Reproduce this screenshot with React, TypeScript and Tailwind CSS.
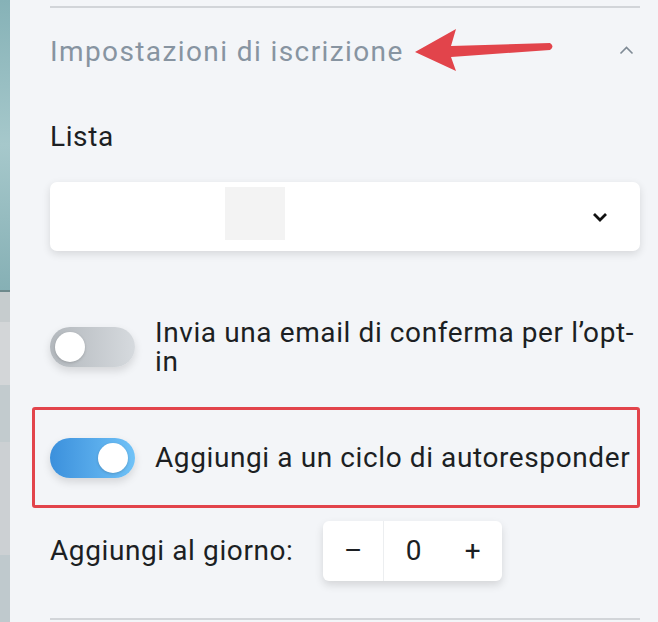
import { useState } from 'react';

function Toggle({ on, onChange }: { on: boolean; onChange: () => void }) {
  return (
    <button
      type="button"
      onClick={onChange}
      className={`relative h-[40px] w-[85px] shrink-0 rounded-full shadow-[0_4px_9px_rgba(0,0,0,0.13)] ${
        on ? 'bg-gradient-to-r from-[#3b90dc] to-[#70c2f7]' : 'bg-gradient-to-r from-[#b3b8bd] to-[#d6dade]'
      }`}
    >
      <span
        className={`absolute top-[5px] h-[30px] w-[30px] rounded-full bg-white shadow-[0_1px_3px_rgba(0,0,0,0.18)] ${
          on ? 'left-[48px]' : 'left-[5px]'
        }`}
      />
    </button>
  );
}

export default function App() {
  const [optin, setOptin] = useState(false);
  const [auto, setAuto] = useState(true);
  const [day, setDay] = useState(0);

  return (
    <div className="flex h-[622px] w-[658px] overflow-hidden bg-[#f3f5f8] font-['Roboto','Liberation_Sans',sans-serif]">
      {/* Blurred background strip */}
      <div className="flex w-[10px] shrink-0 flex-col">
        <div className="h-[290px] bg-gradient-to-b from-[#86b2b7] via-[#a6c8cb] to-[#86b0b5]" />
        <div className="h-[2px] bg-[#6d898c]" />
        <div className="h-[30px] bg-[#c6ccce]" />
        <div className="h-[63px] bg-[#d3d6d8]" />
        <div className="h-[57px] bg-[#c2cbce]" />
        <div className="h-[113px] bg-[#ccd0d3]" />
        <div className="flex-1 bg-[#bfc9cd]" />
      </div>

      <div className="flex flex-1 flex-col pl-[40px] pr-[18px] tracking-[0.6px] text-[#1c1f23]">
        <div className="mt-[6px] h-[2px] shrink-0 bg-[#d2d5d9]" />

        {/* Section header */}
        <div className="relative flex h-[84px] shrink-0 items-center justify-between">
          <h2 className="pt-[4px] text-[28px] leading-[34px] tracking-[1.4px] text-[#8794a1]">Impostazioni di iscrizione</h2>
          <svg className="absolute left-[365px] top-[20px]" width="145" height="45" viewBox="415 28 145 45">
            <path d="M415 52 L456 29 L451 46 L550 43 Q555 46.5 550 50 L451 57 L456 71 Z" fill="#e2444b" />
          </svg>
          <svg className="mr-[6px]" width="15" height="9" viewBox="0 0 15 9">
            <path d="M1.5 7.5 L7.5 1.5 L13.5 7.5" fill="none" stroke="#7f8a95" strokeWidth="1.6" />
          </svg>
        </div>

        <label className="mt-[29px] text-[28px] leading-[32px]">Lista</label>

        <div className="mt-[29px] flex h-[69px] shrink-0 items-center justify-between rounded-[7px] bg-white shadow-[0_3px_9px_rgba(0,0,0,0.12)]">
          <div className="mt-[5px] ml-[175px] h-[53px] w-[60px] self-start bg-[#f3f3f3]" />
          <svg className="mr-[32px]" width="16" height="10" viewBox="0 0 16 10">
            <path d="M2 2 L8 8 L14 2" fill="none" stroke="#111" strokeWidth="2.8" />
          </svg>
        </div>

        <div className="mt-[67px] flex items-center gap-[20px]">
          <Toggle on={optin} onChange={() => setOptin(!optin)} />
          <p className="text-[28px] leading-[29px]">Invia una email di conferma per l’opt-in</p>
        </div>

        <div className="mt-[31px] -ml-[18px] flex h-[101px] shrink-0 items-center gap-[20px] rounded-[3px] border-[3px] border-[#e2444b] pl-[15px]">
          <Toggle on={auto} onChange={() => setAuto(!auto)} />
          <span className="text-[28px]">Aggiungi a un ciclo di autoresponder</span>
        </div>

        <div className="mt-[13px] flex items-center gap-[30px]">
          <span className="text-[28px]">Aggiungi al giorno:</span>
          <div className="flex h-[60px] rounded-[6px] bg-white shadow-[0_4px_9px_rgba(0,0,0,0.13)]">
            <button type="button" onClick={() => setDay(Math.max(0, day - 1))} className="w-[60px] text-[28px]">
              –
            </button>
            <div className="flex w-[60px] items-center justify-center border-l border-[#eceef0] text-[28px]">
              {day}
            </div>
            <button type="button" onClick={() => setDay(day + 1)} className="w-[59px] text-[28px]">
              +
            </button>
          </div>
        </div>

        <div className="mt-[37px] h-[2px] shrink-0 bg-[#d2d5d9]" />
      </div>
    </div>
  );
}
